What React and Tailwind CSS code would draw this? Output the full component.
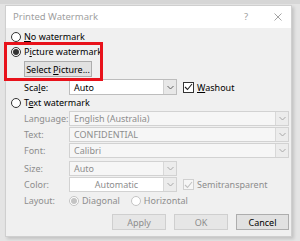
import { useState } from "react";

function Radio({ checked, disabled, label }) {
  return (
    <div className="flex items-center h-full">
      <span className={`w-[10px] h-[10px] rounded-full border flex items-center justify-center bg-white ${disabled ? "border-[#c4c4c4]" : "border-[#333]"}`}>
        {checked && <span className={`w-[6px] h-[6px] rounded-full ${disabled ? "bg-[#c4c4c4]" : "bg-[#333]"}`}></span>}
      </span>
      <span className={`ml-[3px] ${disabled ? "text-[#8d8d8d]" : "text-black"}`}>{label}</span>
    </div>
  );
}

function Chevron({ dim }) {
  return (
    <svg width="7" height="5" viewBox="0 0 7 5">
      <path d="M0.5 1 L3.5 4 L6.5 1" fill="none" stroke={dim ? "#a8a8a8" : "#606060"} strokeWidth="1" />
    </svg>
  );
}

function Select({ value, disabled, width }) {
  return (
    <div className={`flex h-full border ${disabled ? "border-[#d2d2d2] bg-[#f6f6f6]" : "border-[#bdbdbd] bg-white"}`} style={width ? { width } : undefined}>
      <div className={`flex-1 flex items-center px-[4px] ${disabled ? "text-[#8d8d8d]" : "text-black"}`}>{value}</div>
      <div className={`w-[13px] flex items-center justify-center border-l ${disabled ? "border-[#d8d8d8] bg-[#ececec]" : "border-[#d0d0d0] bg-[#e8e8e8]"}`}>
        <Chevron dim={disabled} />
      </div>
    </div>
  );
}

function Check({ checked, disabled, label }) {
  return (
    <div className="flex items-center h-full ml-[6px]">
      <span className={`w-[11px] h-[11px] border flex items-center justify-center ${disabled ? "border-[#d0d0d0] bg-[#f6f6f6]" : "border-[#333] bg-white"}`}>
        {checked && (
          <svg width="9" height="8" viewBox="0 0 9 8">
            <path d="M1 4 L3.5 6.5 L8 1" fill="none" stroke={disabled ? "#c0c0c0" : "#222"} strokeWidth="1.1" />
          </svg>
        )}
      </span>
      <span className={`ml-[3px] ${disabled ? "text-[#8d8d8d]" : "text-black"}`}>{label}</span>
    </div>
  );
}

function Row({ label, children, mt = "" }) {
  return (
    <div className={`flex items-stretch h-[15px] ${mt}`}>
      <div className="w-[45px] flex items-center text-[#8d8d8d]">{label}</div>
      {children}
    </div>
  );
}

export default function App() {
  const [mode] = useState("picture");

  return (
    <div className="w-[300px] h-[241px] bg-[#e4e4e4] relative overflow-hidden" style={{ fontFamily: '"Noto Sans", "Open Sans", sans-serif' }}>
      <div className="absolute left-0 top-0 w-[300px] h-[4px] bg-[#d6d6d6]"></div>
      <div className="ml-[5px] pt-[5px] w-[287px] text-[9px] leading-none">
        <div className="bg-[#f0f0f0] border border-[#cfcfcf] shadow-[2px_2px_3px_rgba(0,0,0,0.15)]">
          <div className="bg-white h-[22px] flex items-center pl-[7px] pr-[9px] text-[#a0a0a0] text-[9.5px]">
            <span className="flex-1">Printed Watermark</span>
            <span className="mr-[26px]">?</span>
            <svg width="8" height="8" viewBox="0 0 8 8">
              <path d="M0.5 0.5 L7.5 7.5 M7.5 0.5 L0.5 7.5" stroke="#9a9a9a" strokeWidth="0.9" />
            </svg>
          </div>

          <div className="pl-[5px] pr-[2px] pt-[1px] pb-[6px]">
            <div className="h-[15px]">
              <Radio label={<><u>N</u>o watermark</>} checked={mode === "none"} />
            </div>
            <div className="h-[15px]">
              <Radio label={<>P<u>i</u>cture watermark</>} checked={mode === "picture"} />
            </div>
            <div className="pl-[13px] mt-[2px] h-[16px] flex">
              <div className="w-[68px] h-full border border-[#adadad] bg-[#e1e1e1] flex items-center justify-center text-black">
                Select <u className="ml-[2px]">P</u>icture...
              </div>
            </div>
            <div className="pl-[13px] mt-[2px]">
              <div className="flex items-stretch h-[16px]">
                <div className="w-[45px] flex items-center text-black">Sca<u>l</u>e:</div>
                <Select value="Auto" width="108px" />
                <Check checked label={<><u>W</u>ashout</>} />
              </div>
            </div>
            <div className="h-[15px]">
              <Radio label={<>T<u>e</u>xt watermark</>} />
            </div>
            <div className="pl-[13px] mt-[1px] flex flex-col gap-[1px]">
              <Row label="Language:">
                <div className="flex-1"><Select value="English (Australia)" disabled /></div>
              </Row>
              <Row label="Text:">
                <div className="flex-1"><Select value="CONFIDENTIAL" disabled /></div>
              </Row>
              <Row label="Font:">
                <div className="flex-1"><Select value="Calibri" disabled /></div>
              </Row>
              <Row label="Size:" mt="mt-[2px]">
                <Select value="Auto" disabled width="108px" />
              </Row>
              <Row label="Color:">
                <div className="flex h-full w-[108px] border border-[#d2d2d2] bg-white">
                  <div className="flex-1 flex items-center justify-center text-[#8d8d8d]">Automatic</div>
                  <div className="w-[13px] flex items-center justify-center border-l border-[#d8d8d8] bg-[#ececec]">
                    <Chevron dim />
                  </div>
                </div>
                <Check checked disabled label="Semitransparent" />
              </Row>
              <Row label="Layout:">
                <div className="flex items-center">
                  <Radio checked disabled label="Diagonal" />
                  <span className="ml-[11px]"><Radio disabled label="Horizontal" /></span>
                </div>
              </Row>
            </div>
            <div className="flex justify-end gap-[8px] mt-[6px] h-[16px]">
              <div className="w-[54px] border border-[#cfcfcf] bg-[#e6e6e6] flex items-center justify-center text-[#8d8d8d]">Apply</div>
              <div className="w-[54px] border border-[#cfcfcf] bg-[#e6e6e6] flex items-center justify-center text-[#8d8d8d]">OK</div>
              <div className="w-[53px] border border-[#adadad] bg-[#e1e1e1] flex items-center justify-center text-black">Cancel</div>
            </div>
          </div>
        </div>
      </div>
      <div className="absolute left-[4px] top-[42px] w-[99px] h-[39px] border-[3px] border-[#e8121b]"></div>
    </div>
  );
}
